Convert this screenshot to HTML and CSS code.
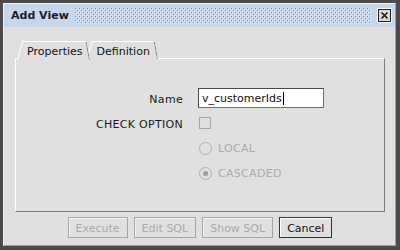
FILE: index.html
```html
<!DOCTYPE html>
<html lang="en">
<head>
    <meta charset="UTF-8">
    <title>Add View</title>
    <link rel="stylesheet" href="styles.css">
</head>
<body>
    <div class="window">
        <div class="dialog">
            <!-- Title Bar -->
            <div class="titlebar">
                <span class="title">Add View</span>
                <svg class="grip" height="16">
                    <defs>
                        <pattern id="bumps" width="4" height="4" patternUnits="userSpaceOnUse">
                            <rect x="0" y="0" width="1" height="1" fill="#7f8ea6"/>
                            <rect x="2" y="2" width="1" height="1" fill="#7f8ea6"/>
                            <rect x="1" y="1" width="1" height="1" fill="#eef3fa"/>
                            <rect x="3" y="3" width="1" height="1" fill="#eef3fa"/>
                        </pattern>
                    </defs>
                    <rect width="100%" height="16" fill="url(#bumps)"/>
                </svg>
                <div class="close-btn">
                    <svg width="15" height="15" viewBox="0 0 15 15">
                        <rect x="0.5" y="0.5" width="14" height="14" fill="none" stroke="#ffffff"/>
                        <rect x="1.5" y="1.5" width="12" height="12" fill="#d6d9de" stroke="#1c1c1c"/>
                        <path d="M4.5 4.5l6 6M10.5 4.5l-6 6" stroke="#1c1c1c" stroke-width="1.7"/>
                    </svg>
                </div>
            </div>

            <!-- Content -->
            <div class="content">
                <div class="tabs">
                    <div class="tab active">Properties</div>
                    <div class="tab">Definition</div>
                </div>

                <div class="panel">
                    <div class="form">
                        <label class="form-label">Name</label>
                        <div class="text-field">v_customerIds<span class="caret"></span></div>

                        <label class="form-label">CHECK OPTION</label>
                        <div class="field"><span class="checkbox"></span></div>

                        <span></span>
                        <div class="field disabled"><span class="radio"></span>LOCAL</div>

                        <span></span>
                        <div class="field disabled"><span class="radio checked"></span>CASCADED</div>
                    </div>
                </div>

                <!-- Buttons -->
                <div class="buttons">
                    <button class="btn" disabled>Execute</button>
                    <button class="btn" disabled>Edit SQL</button>
                    <button class="btn" disabled>Show SQL</button>
                    <button class="btn">Cancel</button>
                </div>
            </div>
        </div>
    </div>
</body>
</html>
```

FILE: styles.css
```css
/* General Reset */
* {
    margin: 0;
    padding: 0;
    box-sizing: border-box;
}

body {
    background-color: #4b4b4b;
    font-family: "DejaVu Sans", Verdana, sans-serif;
    font-size: 11px;
    color: #111111;
}

/* Window Frame */
.window {
    width: 400px;
    height: 250px;
    border: 3px solid #4b4b4b;
    border-right-width: 4px;
    border-bottom-width: 4px;
}

.dialog {
    height: 100%;
    background-color: #e0e0e0;
    border: 1px solid;
    border-color: #f2f2f2 #a0a0a0 #a0a0a0 #f2f2f2;
    display: flex;
    flex-direction: column;
}

/* Title Bar */
.titlebar {
    height: 23px;
    background-color: #c7d6e9;
    display: flex;
    align-items: center;
    padding: 0 3px 0 7px;
}

.title {
    font-weight: bold;
    color: #1a1d2a;
}

.grip {
    flex: 1;
    margin: 0 6px 0 6px;
}

.close-btn {
    width: 15px;
    height: 15px;
    display: flex;
}

/* Content */
.content {
    flex: 1;
    padding: 14px 10px 0 11px;
    display: flex;
    flex-direction: column;
}

/* Tabs */
.tabs {
    display: flex;
    height: 18px;
    padding-left: 2px;
    margin-bottom: -1px;
    position: relative;
    z-index: 1;
}

.tab {
    position: relative;
    z-index: 1;
    height: 18px;
    line-height: 17px;
    padding: 2px 8px 0 10px;
}

.tab + .tab {
    margin-left: -4px;
}

.tab.active {
    z-index: 2;
    height: 19px;
}

.tab::before,
.tab::after {
    content: '';
    position: absolute;
    top: 0;
    bottom: 0;
    width: 60%;
    background-color: #e0e0e0;
    border-top: 1px solid #ffffff;
    z-index: -1;
}

.tab::before {
    left: 0;
    border-left: 1px solid #ffffff;
    transform: skewX(-15deg);
    transform-origin: bottom left;
}

.tab::after {
    right: 0;
    border-right: 1px solid #7c7c7c;
    border-top-right-radius: 3px;
    transform: skewX(10deg);
    transform-origin: bottom right;
}

/* Panel */
.panel {
    height: 154px;
    border: 1px solid;
    border-color: #ffffff #7c7c7c #7c7c7c #ffffff;
    padding-top: 29px;
}

.form {
    display: grid;
    grid-template-columns: 167px 126px;
    grid-auto-rows: 20px;
    column-gap: 15px;
    row-gap: 5px;
    align-items: center;
}

.form-label {
    text-align: right;
    color: #1a1a1a;
    letter-spacing: 0.3px;
    padding-top: 2px;
}

.text-field {
    height: 20px;
    background-color: #ffffff;
    border: 1px solid;
    border-color: #4a4a4a #6e6e6e #6e6e6e #4a4a4a;
    padding: 1px 0 0 3px;
    color: #111111;
    display: flex;
    align-items: center;
}

.caret {
    display: inline-block;
    width: 1px;
    height: 13px;
    background-color: #000000;
    margin-left: 1px;
}

.field {
    display: flex;
    align-items: center;
    gap: 6px;
    padding-left: 1px;
}

.field.disabled {
    color: #a9a9a9;
    letter-spacing: 0.3px;
    padding-top: 1px;
}

.checkbox {
    width: 12px;
    height: 12px;
    border: 1px solid #a6a6a6;
}

.radio {
    width: 13px;
    height: 13px;
    border: 1px solid #b0b0b0;
    border-radius: 50%;
    display: flex;
    align-items: center;
    justify-content: center;
}

.radio.checked::after {
    content: '';
    width: 5px;
    height: 5px;
    border-radius: 50%;
    background-color: #a0a0a0;
}

/* Buttons */
.buttons {
    display: flex;
    justify-content: center;
    gap: 6px;
    margin-top: 5px;
}

.btn {
    height: 21px;
    padding: 1px 7px 0;
    font-family: "DejaVu Sans", Verdana, sans-serif;
    font-size: 11px;
    background-color: #e0e0e0;
    color: #111111;
    border: 1px solid #333333;
    box-shadow: inset 1px 1px 0 #ffffff;
}

.btn:disabled {
    color: #a9a9a9;
    border-color: #a6a6a6;
    box-shadow: inset 1px 1px 0 #f2f2f2;
}
```
